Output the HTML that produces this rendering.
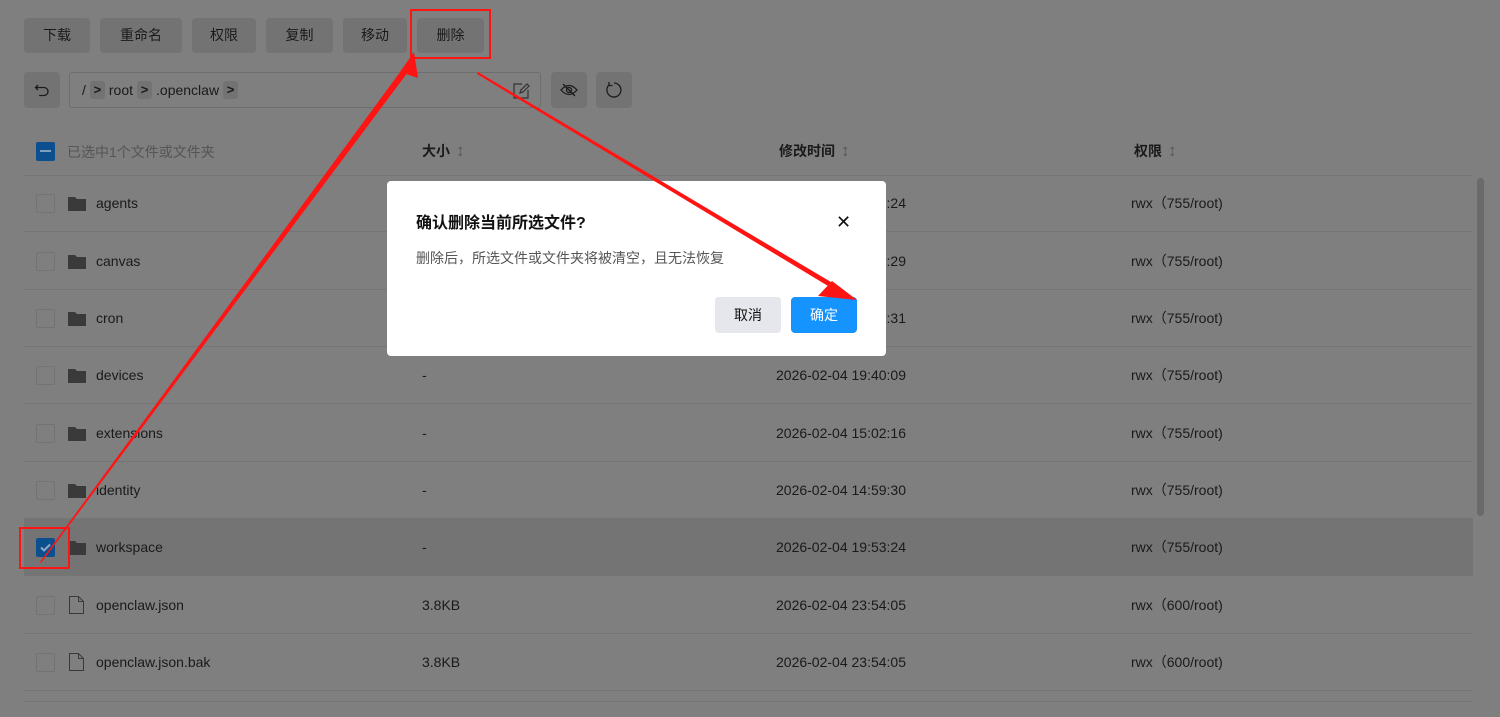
<!DOCTYPE html>
<html><head><meta charset="utf-8"><style>
*{box-sizing:border-box;margin:0;padding:0}
body{width:1500px;height:717px;overflow:hidden;background:#7f7f7f;font-family:"Liberation Sans","Noto Sans CJK SC",sans-serif;color:#1a1a1a;position:relative;font-size:14px}
.btn{position:absolute;top:18px;height:35px;background:#737373;border-radius:4px;font-size:14px;line-height:35px;text-align:center;color:#1a1a1a}
.ib{position:absolute;top:72px;width:36px;height:36px;background:#737373;border-radius:4px;display:flex;align-items:center;justify-content:center}
.path{position:absolute;left:69px;top:72px;width:472px;height:36px;border:1px solid #6e6e6e;border-radius:3px;display:flex;align-items:center;padding-left:12px;font-size:14px}
.chev{display:inline-block;background:#737373;border-radius:3px;width:15px;height:18px;margin:0 4px;text-align:center;line-height:18px;font-size:13px;font-weight:bold}
.row{position:absolute;left:24px;width:1449px;height:57px;border-bottom:1px solid #757575}
.cb{position:absolute;left:12px;width:19px;height:19px;border:1px solid #737373;border-radius:2px;top:19px}
.row span{position:absolute;top:19px;line-height:19px}
.hd{position:absolute;top:141px;font-weight:bold;font-size:14px}
.so{font-weight:normal;color:#555;font-size:17px;margin-left:6px}
</style></head><body>
<div class="btn" style="left:24px;width:66px">下载</div>
<div class="btn" style="left:100px;width:82px">重命名</div>
<div class="btn" style="left:192px;width:64px">权限</div>
<div class="btn" style="left:266px;width:67px">复制</div>
<div class="btn" style="left:343px;width:64px">移动</div>
<div class="btn" style="left:417px;width:67px">删除</div>
<div class="ib" style="left:24px"><svg width="16" height="16" viewBox="0 0 16 16" fill="none" stroke="#1c1c1c" stroke-width="1.3"><path d="M4 3L1.5 5.5 4 8M2 5.5h8a4 4 0 010 8H5"/></svg></div>
<div class="path">/<span class="chev">&gt;</span>root<span class="chev">&gt;</span>.openclaw<span class="chev">&gt;</span>
<svg style="position:absolute;right:10px;top:9px" width="18" height="18" viewBox="0 0 18 18" fill="none" stroke="#333" stroke-width="1.2"><path d="M10 2H2v14h14V8M8 11l1-3 6-6 2 2-6 6z"/></svg></div>
<div class="ib" style="left:551px"><svg width="18" height="18" viewBox="0 0 18 18" fill="none" stroke="#1c1c1c" stroke-width="1.3"><path d="M1 9q8-9 16 0q-8 9-16 0z"/><circle cx="9" cy="9" r="2.5"/><path d="M3 3l12 12"/></svg></div>
<div class="ib" style="left:596px"><svg width="18" height="18" viewBox="0 0 18 18" fill="none" stroke="#1c1c1c" stroke-width="1.3"><path d="M4 4A7 7 0 1 0 9 2M4 1v3.5h3.5"/></svg></div>
<div style="position:absolute;left:36px;top:142px;width:19px;height:19px;background:#0c4f8f;border-radius:2px"><div style="position:absolute;left:4px;top:8px;width:11px;height:2px;background:#7f9fbf"></div></div>
<div style="position:absolute;left:67px;top:142px;color:#555;font-size:14px">已选中1个文件或文件夹</div>
<div class="hd" style="left:422px">大小<span class="so">↕</span></div>
<div class="hd" style="left:779px">修改时间<span class="so">↕</span></div>
<div class="hd" style="left:1134px">权限<span class="so">↕</span></div>
<div style="position:absolute;left:24px;top:175px;width:1449px;height:1px;background:#757575"></div>
<div style="position:absolute;left:1477px;top:178px;width:7px;height:338px;background:#6a6a6a;border-radius:4px"></div>
<div style="position:absolute;left:24px;top:519px;width:1449px;height:57px;background:#747474"></div>

<div class="row" style="top:175px"><div class="cb"></div><svg style="position:absolute;left:44px;top:20px" width="18" height="16"><path d="M0 2h7l2 2h9v12H0z" fill="#3a3a3a"/></svg><span style="left:72px">agents</span><span style="left:398px">-</span><span style="left:752px">2026-02-04 14:59:24</span><span style="left:1107px">rwx（755/root)</span></div>
<div class="row" style="top:233px"><div class="cb"></div><svg style="position:absolute;left:44px;top:20px" width="18" height="16"><path d="M0 2h7l2 2h9v12H0z" fill="#3a3a3a"/></svg><span style="left:72px">canvas</span><span style="left:398px">-</span><span style="left:752px">2026-02-04 14:59:29</span><span style="left:1107px">rwx（755/root)</span></div>
<div class="row" style="top:290px"><div class="cb"></div><svg style="position:absolute;left:44px;top:20px" width="18" height="16"><path d="M0 2h7l2 2h9v12H0z" fill="#3a3a3a"/></svg><span style="left:72px">cron</span><span style="left:398px">-</span><span style="left:752px">2026-02-04 15:26:31</span><span style="left:1107px">rwx（755/root)</span></div>
<div class="row" style="top:347px"><div class="cb"></div><svg style="position:absolute;left:44px;top:20px" width="18" height="16"><path d="M0 2h7l2 2h9v12H0z" fill="#3a3a3a"/></svg><span style="left:72px">devices</span><span style="left:398px">-</span><span style="left:752px">2026-02-04 19:40:09</span><span style="left:1107px">rwx（755/root)</span></div>
<div class="row" style="top:405px"><div class="cb"></div><svg style="position:absolute;left:44px;top:20px" width="18" height="16"><path d="M0 2h7l2 2h9v12H0z" fill="#3a3a3a"/></svg><span style="left:72px">extensions</span><span style="left:398px">-</span><span style="left:752px">2026-02-04 15:02:16</span><span style="left:1107px">rwx（755/root)</span></div>
<div class="row" style="top:462px"><div class="cb"></div><svg style="position:absolute;left:44px;top:20px" width="18" height="16"><path d="M0 2h7l2 2h9v12H0z" fill="#3a3a3a"/></svg><span style="left:72px">identity</span><span style="left:398px">-</span><span style="left:752px">2026-02-04 14:59:30</span><span style="left:1107px">rwx（755/root)</span></div>
<div class="row" style="top:519px"><div class="cb" style="background:#0c4f8f;border-color:#0c4f8f"><svg width="17" height="17" viewBox="0 0 17 17"><path d="M4 8.5l3 3 6-6" fill="none" stroke="#8fa9c4" stroke-width="2"/></svg></div><svg style="position:absolute;left:44px;top:20px" width="18" height="16"><path d="M0 2h7l2 2h9v12H0z" fill="#3a3a3a"/></svg><span style="left:72px">workspace</span><span style="left:398px">-</span><span style="left:752px">2026-02-04 19:53:24</span><span style="left:1107px">rwx（755/root)</span></div>
<div class="row" style="top:577px"><div class="cb"></div><svg style="position:absolute;left:45px;top:19px" width="15" height="18" fill="none" stroke="#3a3a3a" stroke-width="1"><path d="M.5.5h9l5 5v12H.5z M9.5.5v5h5"/></svg><span style="left:72px">openclaw.json</span><span style="left:398px">3.8KB</span><span style="left:752px">2026-02-04 23:54:05</span><span style="left:1107px">rwx（600/root)</span></div>
<div class="row" style="top:634px"><div class="cb"></div><svg style="position:absolute;left:45px;top:19px" width="15" height="18" fill="none" stroke="#3a3a3a" stroke-width="1"><path d="M.5.5h9l5 5v12H.5z M9.5.5v5h5"/></svg><span style="left:72px">openclaw.json.bak</span><span style="left:398px">3.8KB</span><span style="left:752px">2026-02-04 23:54:05</span><span style="left:1107px">rwx（600/root)</span></div>
<div style="position:absolute;left:24px;top:701px;width:1449px;height:1px;background:#757575"></div>

<div style="position:absolute;left:387px;top:181px;width:499px;height:175px;background:#fff;border-radius:4px">
<div style="position:absolute;left:29px;top:28px;font-size:16px;font-weight:bold;color:#111">确认删除当前所选文件?</div>
<div style="position:absolute;left:449px;top:31px;font-size:18px;color:#111">✕</div>
<div style="position:absolute;left:29px;top:67px;font-size:14px;color:#555">删除后，所选文件或文件夹将被清空，且无法恢复</div>
<div style="position:absolute;left:328px;top:116px;width:66px;height:36px;background:#e6e7ec;border-radius:4px;text-align:center;line-height:36px;color:#111">取消</div>
<div style="position:absolute;left:404px;top:116px;width:66px;height:36px;background:#1593ff;border-radius:4px;text-align:center;line-height:36px;color:#fff">确定</div>
</div>

<svg style="position:absolute;left:0;top:0" width="1500" height="717">
<g fill="none" stroke="#ff1414" stroke-width="2"><rect x="411" y="10" width="79" height="48"/><rect x="20" y="528" width="49" height="40"/></g>
<polygon points="40,562 41,563 411,68 406,64" fill="#ff1414"/>
<polygon points="400,72 414,52 418,78" fill="#ff1414"/>
<polygon points="478,72 477,74 838,292 841,288" fill="#ff1414"/>
<polygon points="818,296 857,300 832,281" fill="#ff1414"/>
</svg>
</body></html>
